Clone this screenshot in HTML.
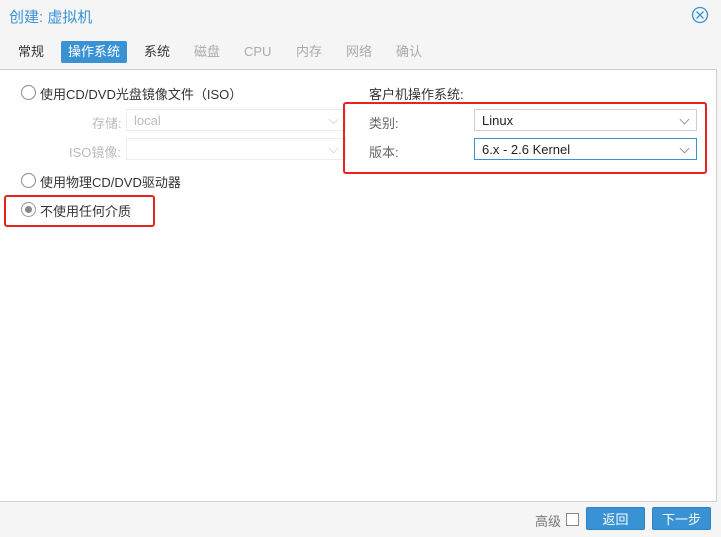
<html><head><style>
body{margin:0;width:721px;height:537px;background:#f5f5f5;font-family:"Liberation Sans","Noto Sans CJK SC",sans-serif;font-size:13px;position:relative;overflow:hidden;color:#333}
.a{position:absolute}
.title{left:9px;top:6px;font-size:15px;color:#3892d4}
.tab{top:41px;height:22px;line-height:22px;color:#333}
.dis{color:#aaa}
.act{background:#3892d4;color:#fff;padding:0 7px;border-radius:2px}
.panel{left:0;top:69px;width:716px;height:431px;background:#fff;border-top:1px solid #d0d0d0;border-right:1px solid #d0d0d0;border-bottom:1px solid #d0d0d0}
.radio{width:13px;height:13px;border:1px solid #888;border-radius:50%;background:#fff}
.sel{border:1px solid #cfcfcf;height:22px;line-height:22px;padding-left:7px;color:#222;box-sizing:border-box}
.chev{position:absolute;right:8px;top:6px;width:6px;height:6px;border-right:1px solid #999;border-bottom:1px solid #999;transform:rotate(45deg)}
.btn{top:507px;height:23px;width:59px;background:#3892d4;border:1px solid #2f80c0;border-radius:2px;color:#fff;text-align:center;line-height:23px;box-sizing:border-box}
.red{border:2px solid #e8221f;border-radius:3px}
</style></head><body>
<div class="a title">创建: 虚拟机</div>
<svg class="a" style="left:691px;top:6px" width="18" height="18"><circle cx="9" cy="9" r="7.5" fill="none" stroke="#3892d4" stroke-width="1.3"/><path d="M5.5 5.5L12.5 12.5M12.5 5.5L5.5 12.5" stroke="#3892d4" stroke-width="1.3"/></svg>
<div class="a tab" style="left:18px">常规</div>
<div class="a tab act" style="left:61px">操作系统</div>
<div class="a tab" style="left:144px">系统</div>
<div class="a tab dis" style="left:194px">磁盘</div>
<div class="a tab dis" style="left:244px">CPU</div>
<div class="a tab dis" style="left:296px">内存</div>
<div class="a tab dis" style="left:346px">网络</div>
<div class="a tab dis" style="left:396px">确认</div>
<div class="a panel"></div>
<div class="a radio" style="left:21px;top:85px"></div>
<div class="a" style="left:40px;top:84px">使用CD/DVD光盘镜像文件（ISO）</div>
<div class="a dis" style="left:92px;top:113px;color:#bbb">存储:</div>
<div class="a sel" style="left:126px;top:109px;width:220px;color:#bbb;border-color:#eee">local<div class="chev" style="border-color:#ddd"></div></div>
<div class="a" style="left:69px;top:142px;color:#bbb">ISO镜像:</div>
<div class="a sel" style="left:126px;top:138px;width:220px;border-color:#eee"><div class="chev" style="border-color:#ddd"></div></div>
<div class="a radio" style="left:21px;top:173px"></div>
<div class="a" style="left:40px;top:172px">使用物理CD/DVD驱动器</div>
<div class="a radio" style="left:21px;top:202px;border-color:#999"></div>
<div class="a" style="left:25px;top:206px;width:7px;height:7px;border-radius:50%;background:#888"></div>
<div class="a" style="left:40px;top:201px">不使用任何介质</div>
<div class="a red" style="left:4px;top:195px;width:147px;height:28px"></div>
<div class="a" style="left:369px;top:84px">客户机操作系统:</div>
<div class="a" style="left:369px;top:113px;color:#666">类别:</div>
<div class="a sel" style="left:474px;top:109px;width:223px">Linux<div class="chev"></div></div>
<div class="a" style="left:369px;top:142px;color:#666">版本:</div>
<div class="a sel" style="left:474px;top:138px;width:223px;border-color:#3892d4">6.x - 2.6 Kernel<div class="chev"></div></div>
<div class="a red" style="left:343px;top:102px;width:360px;height:68px"></div>
<div class="a" style="left:535px;top:511px;color:#777">高级</div>
<div class="a" style="left:566px;top:513px;width:11px;height:11px;border:1px solid #888;background:#fff"></div>
<div class="a btn" style="left:586px">返回</div>
<div class="a btn" style="left:652px">下一步</div>
</body></html>
